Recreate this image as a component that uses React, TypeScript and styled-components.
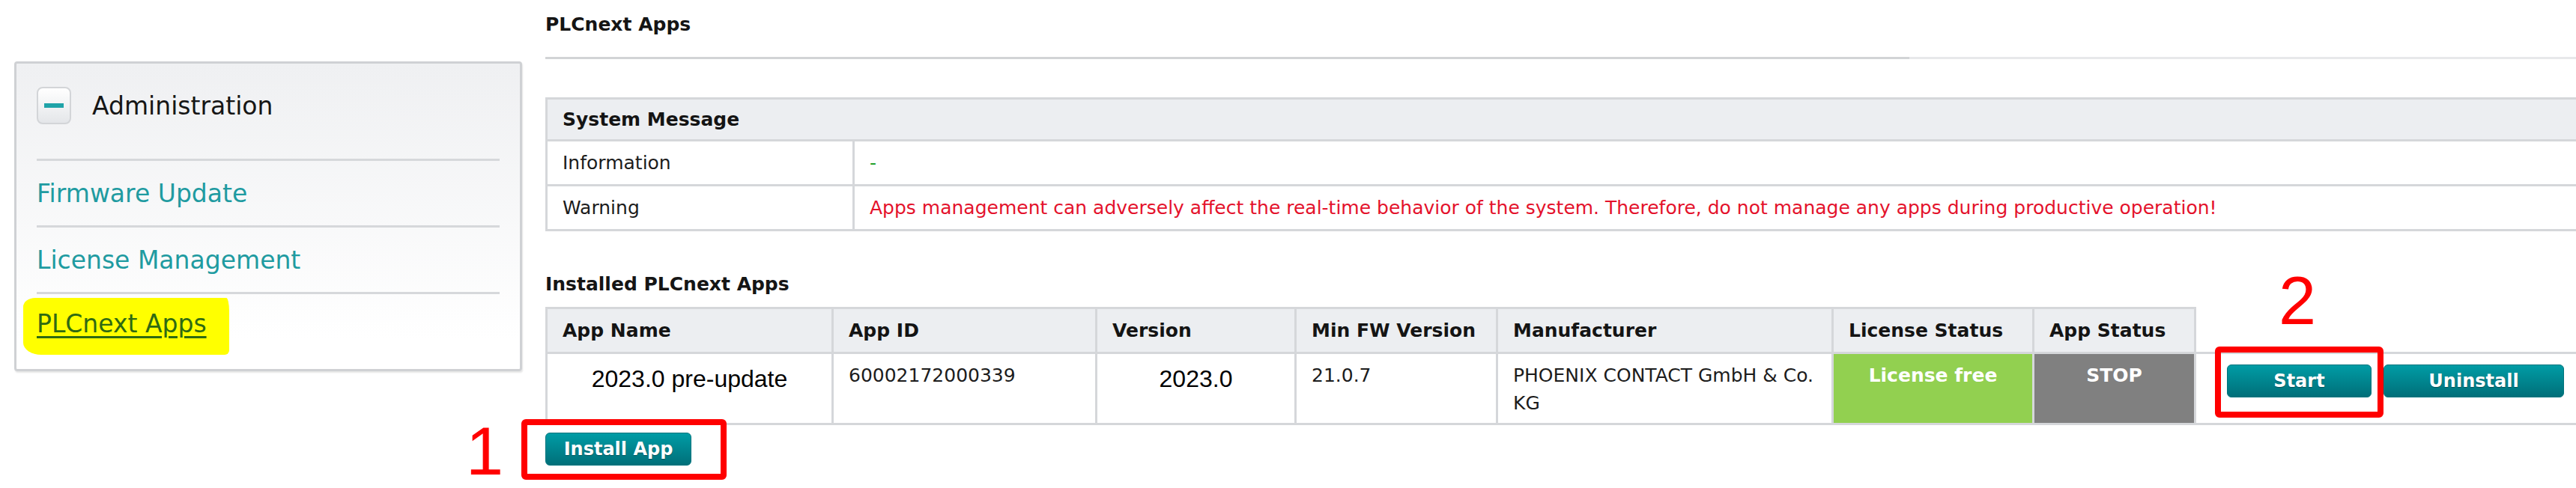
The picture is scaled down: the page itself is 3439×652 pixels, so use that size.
import React from "react";
import styled, { createGlobalStyle } from "styled-components";

const GlobalStyle = createGlobalStyle`
  html, body {
    margin: 0;
    padding: 0;
    background: #ffffff;
    overflow: hidden;
  }
  body {
    font-family: "DejaVu Sans", Verdana, sans-serif;
    color: #1c1c1c;
  }
  * {
    box-sizing: border-box;
  }
`;

const Page = styled.div`
  display: flex;
  align-items: flex-start;
  width: 3439px;
  height: 652px;
  padding-left: 19px;
  overflow: hidden;
`;

/* ---------- sidebar ---------- */

const Sidebar = styled.aside`
  flex: none;
  width: 678px;
  margin-top: 82px;
  padding: 31px 27px 14px;
  border: 3px solid #cfd1d4;
  border-radius: 4px;
  background: linear-gradient(#eff0f2, #ffffff 90%);
  box-shadow: 1px 2px 2px rgba(0, 0, 0, 0.1);
`;

const GroupHead = styled.div`
  display: flex;
  align-items: center;
  gap: 28px;
  padding-bottom: 46px;
  font-size: 33px;
  color: #161616;
`;

const Toggle = styled.span`
  display: flex;
  align-items: center;
  justify-content: center;
  width: 46px;
  height: 50px;
  border: 2px solid #d3d5d8;
  border-radius: 8px;
  background: linear-gradient(#ffffff, #e4e6e9);

  &::before {
    content: "";
    width: 26px;
    height: 6px;
    background: #1fa3a8;
  }
`;

const NavItem = styled.div`
  display: flex;
  align-items: center;
  height: 89px;
  border-top: 3px solid #d6d8db;
  font-size: 33px;
`;

const NavLink = styled.a`
  color: #1f9ba1;
  text-decoration: none;
`;

const Marked = styled.a`
  color: #2f6a12;
  text-decoration: underline;
  text-decoration-thickness: 3px;
  text-underline-offset: 5px;
  background: #ffff00;
  margin-left: -18px;
  padding: 15px 30px 22px 18px;
  border-radius: 16px 4px 6px 24px / 12px 18px 6px 16px;
`;

/* ---------- main ---------- */

const Main = styled.main`
  flex: 1;
  margin-left: 31px;
  margin-right: -60px;
  padding-top: 18px;
`;

const Heading = styled.h2`
  margin: 0;
  font-size: 25px;
  line-height: 30px;
  font-weight: bold;
  color: #151515;
`;

const Rule = styled.div`
  height: 3px;
  margin: 28px 0 51px;
  background: linear-gradient(to right, #d2d4d6 1821px, #e7e8ea 1821px);
`;

const SubHeading = styled(Heading)`
  margin: 56px 0 15px;
`;

const Grid = styled.table`
  width: 100%;
  border-collapse: collapse;
  table-layout: fixed;
  font-size: 25px;
`;

const Col = styled.col<{ $w?: number }>`
  width: ${(p) => (p.$w ? `${p.$w}px` : "auto")};
`;

const Head = styled.th<{ $h?: number; $blank?: boolean }>`
  height: ${(p) => p.$h ?? 60}px;
  padding: 0 20px;
  text-align: left;
  font-weight: bold;
  white-space: nowrap;
  background: ${(p) => (p.$blank ? "transparent" : "#eceef1")};
  border: 3px solid #d5d7da;
  border-top: ${(p) => (p.$blank ? "none" : "3px solid #d5d7da")};
  border-right: ${(p) => (p.$blank ? "none" : "3px solid #d5d7da")};
  color: #141414;
`;

const Cell = styled.td<{ $h?: number; $color?: string }>`
  height: ${(p) => p.$h ?? 60}px;
  padding: 0 20px;
  border: 3px solid #d5d7da;
  color: ${(p) => p.$color ?? "#1c1c1c"};
  white-space: nowrap;
  overflow: hidden;
`;

const AppCell = styled.td<{ $bg?: string; $align?: string }>`
  height: 95px;
  padding: 10px 20px 0;
  vertical-align: top;
  line-height: 37px;
  border: 3px solid #d5d7da;
  background: ${(p) => p.$bg ?? "transparent"};
  color: ${(p) => (p.$bg ? "#ffffff" : "#1c1c1c")};
  font-weight: ${(p) => (p.$bg ? "bold" : "normal")};
  text-align: ${(p) => p.$align ?? "left"};
  white-space: nowrap;
`;

const ActionCell = styled.td`
  height: 95px;
  padding: 14px 0 0 41px;
  vertical-align: top;
  border-top: 3px solid #d5d7da;
  border-bottom: 3px solid #d5d7da;
`;

const Pasted = styled.span`
  display: block;
  margin-top: 5px;
  font-family: "Liberation Sans", Arial, sans-serif;
  font-size: 32px;
  text-align: center;
  color: #000000;
`;

const Actions = styled.div`
  display: flex;
  gap: 16px;
`;

const Button = styled.button<{ $w: number }>`
  width: ${(p) => p.$w}px;
  height: 44px;
  padding: 0;
  border: 1px solid #00747d;
  border-radius: 6px;
  background: linear-gradient(#009ca5, #006f79);
  color: #ffffff;
  font-family: "DejaVu Sans", Verdana, sans-serif;
  font-size: 24px;
  font-weight: bold;
  text-shadow: 0 1px 1px rgba(0, 0, 0, 0.35);
`;

const Footer = styled.div`
  margin-top: 10px;
`;

/* ---------- annotations ---------- */

const Anchor = styled.span`
  position: relative;
  display: inline-block;
`;

const Frame = styled.span<{ $t: number; $r: number; $b: number; $l: number }>`
  position: absolute;
  top: ${(p) => p.$t}px;
  right: ${(p) => p.$r}px;
  bottom: ${(p) => p.$b}px;
  left: ${(p) => p.$l}px;
  border: 8px solid #ff0000;
  border-radius: 6px;
  pointer-events: none;
`;

const Callout = styled.span<{ $t: number; $l: number }>`
  position: absolute;
  top: ${(p) => p.$t}px;
  left: ${(p) => p.$l}px;
  font-family: "Liberation Sans", Arial, sans-serif;
  font-size: 90px;
  line-height: 1;
  color: #ff0000;
`;

const columns = [
  { label: "App Name", w: 382 },
  { label: "App ID", w: 352 },
  { label: "Version", w: 266 },
  { label: "Min FW Version", w: 269 },
  { label: "Manufacturer", w: 448 },
  { label: "License Status", w: 268 },
  { label: "App Status", w: 216 },
];

export default function App() {
  return (
    <>
      <GlobalStyle />
      <Page>
        <Sidebar>
          <GroupHead>
            <Toggle />
            Administration
          </GroupHead>
          <NavItem>
            <NavLink>Firmware Update</NavLink>
          </NavItem>
          <NavItem>
            <NavLink>License Management</NavLink>
          </NavItem>
          <NavItem>
            <Marked>PLCnext Apps</Marked>
          </NavItem>
        </Sidebar>

        <Main>
          <Heading>PLCnext Apps</Heading>
          <Rule />

          <Grid>
            <colgroup>
              <Col $w={410} />
              <Col />
            </colgroup>
            <thead>
              <tr>
                <Head $h={56} colSpan={2}>
                  System Message
                </Head>
              </tr>
            </thead>
            <tbody>
              <tr>
                <Cell>Information</Cell>
                <Cell $color="#22a02a">-</Cell>
              </tr>
              <tr>
                <Cell>Warning</Cell>
                <Cell $color="#e4122c">
                  Apps management can adversely affect the real-time behavior of the system. Therefore, do not
                  manage any apps during productive operation!
                </Cell>
              </tr>
            </tbody>
          </Grid>

          <SubHeading>Installed PLCnext Apps</SubHeading>

          <Grid>
            <colgroup>
              {columns.map((c) => (
                <Col key={c.label} $w={c.w} />
              ))}
              <Col />
            </colgroup>
            <thead>
              <tr>
                {columns.map((c) => (
                  <Head key={c.label}>{c.label}</Head>
                ))}
                <Head $blank />
              </tr>
            </thead>
            <tbody>
              <tr>
                <AppCell>
                  <Pasted>2023.0 pre-update</Pasted>
                </AppCell>
                <AppCell>60002172000339</AppCell>
                <AppCell>
                  <Pasted>2023.0</Pasted>
                </AppCell>
                <AppCell>21.0.7</AppCell>
                <AppCell>
                  PHOENIX CONTACT GmbH &amp; Co.
                  <br />
                  KG
                </AppCell>
                <AppCell $bg="#92d050" $align="center">
                  License free
                </AppCell>
                <AppCell $bg="#808080" $align="center">
                  STOP
                </AppCell>
                <ActionCell>
                  <Actions>
                    <Anchor>
                      <Button $w={193}>Start</Button>
                      <Frame $t={-24} $r={-16} $b={-27} $l={-16} />
                      <Callout $t={-130} $l={69}>
                        2
                      </Callout>
                    </Anchor>
                    <Button $w={241}>Uninstall</Button>
                  </Actions>
                </ActionCell>
              </tr>
            </tbody>
          </Grid>

          <Footer>
            <Anchor>
              <Button $w={195}>Install App</Button>
              <Frame $t={-18} $r={-47} $b={-19} $l={-32} />
              <Callout $t={-20} $l={-106}>
                1
              </Callout>
            </Anchor>
          </Footer>
        </Main>
      </Page>
    </>
  );
}
